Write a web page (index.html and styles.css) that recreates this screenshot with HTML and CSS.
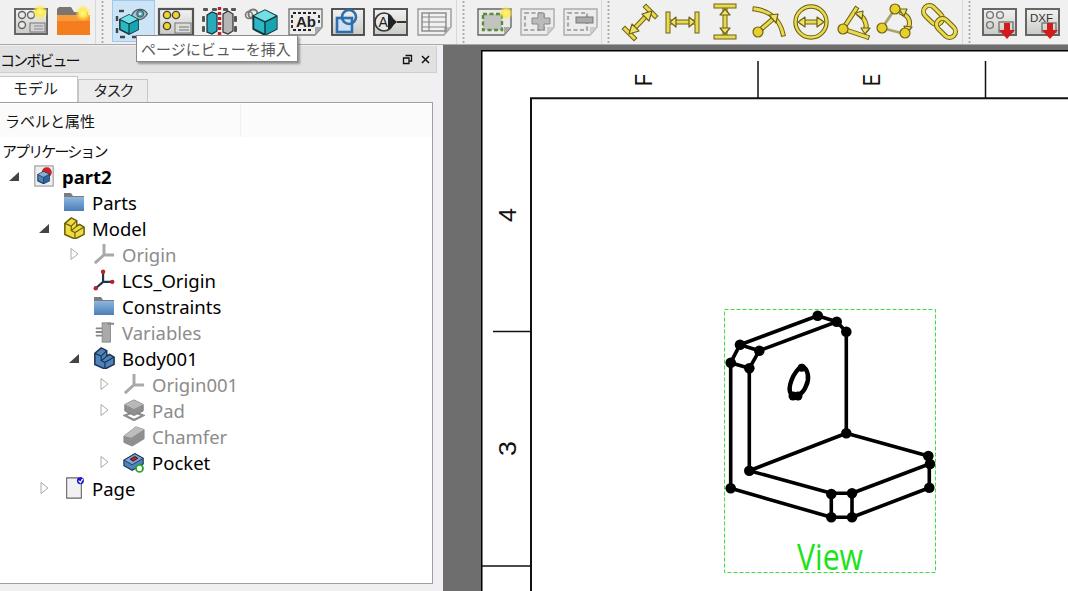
FILE: index.html
```html
<!DOCTYPE html>
<html lang="ja">
<head>
<meta charset="utf-8">
<title>FreeCAD TechDraw</title>
<link rel="stylesheet" href="styles.css">
</head>
<body>
<svg class="defs" aria-hidden="true">
  <defs>
    <radialGradient id="glow"><stop offset="0" stop-color="#fff8a0"/><stop offset=".45" stop-color="#ffe94a"/><stop offset="1" stop-color="#ffe94a" stop-opacity="0"/></radialGradient>
    <linearGradient id="frameFill" x1="0" y1="0" x2="0" y2="1"><stop offset="0" stop-color="#f2f2f0"/><stop offset="1" stop-color="#c9cbc6"/></linearGradient>
    <linearGradient id="folderBlue" x1="0" y1="0" x2="0" y2="1"><stop offset="0" stop-color="#8db6df"/><stop offset="1" stop-color="#4a7fb8"/></linearGradient>
    <symbol id="cube" viewBox="0 0 24 24"><path d="M12 2 22 7V18L12 23 2 18V7Z" fill="#2bb8c4" stroke="#12333a" stroke-width="1.600"/><path d="M2 7 12 2 22 7 12 12Z" fill="#6fe0e4"/><path d="M12 12 22 7V18L12 23Z" fill="#16a3b2"/><path d="M2 7 12 12 22 7M12 12V23" fill="none" stroke="#12333a" stroke-width="1.200"/></symbol>
    <symbol id="bluecube" viewBox="0 0 24 24"><path d="M12 2 22 7V18L12 23 2 18V7Z" fill="#4f83bd" stroke="#1f3553" stroke-width="1.800"/><path d="M2 7 12 2 22 7 12 12Z" fill="#86aed8"/><path d="M12 12 22 7V18L12 23Z" fill="#2f639e"/><path d="M2 7 12 12 22 7M12 12V23" fill="none" stroke="#1f3553" stroke-width="1.300"/></symbol>
    <symbol id="eye" viewBox="0 0 24 24"><path d="M1 13C6 3 18 2 23 11 18 21 6 22 1 13Z" fill="#a9c4c8" stroke="#4a5a60" stroke-width="1.800"/><circle cx="13" cy="11" r="5" fill="#4a9fab" stroke="#334" stroke-width="1"/><circle cx="13" cy="11" r="2" fill="#dfe8ea"/></symbol>
    <symbol id="stair" viewBox="0 0 24 24"><path d="M2 7 9 1 15 4V10L18 8 23 11V19L13 24 2 19Z" stroke-linejoin="round" stroke-width="1.700"/><path d="M2 7 9 10 15 4M9 10V15L13 17 23 11M15 10 9 15M13 17V24" fill="none" stroke-width="1.300"/></symbol>
    <symbol id="axes" viewBox="0 0 24 24"><path d="M12 1V13M12 13H23M12 13 2 22" fill="none" stroke="#a9a9a9" stroke-width="3.200"/></symbol>
    <symbol id="folder" viewBox="0 0 22 20"><path d="M1 1H8L10 4H21V19H1Z" fill="#7c7c7c"/><rect x="1" y="5" width="20" height="14" fill="url(#folderBlue)"/></symbol>
  </defs>
</svg>

<header class="toolbar">
  <div class="group">
    <span class="tb"><svg class="ti" viewBox="0 0 40 40"><rect x="4" y="7" width="32" height="25" fill="url(#frameFill)" stroke="#666" stroke-width="2"/><g fill="#e9e9e9" stroke="#666" stroke-width="1.400"><circle cx="11" cy="13" r="3.500"/><circle cx="20" cy="13" r="3.500"/><circle cx="11" cy="23" r="3.500"/></g><rect x="19" y="21" width="15" height="9" fill="#d4d4d4" stroke="#777"/><path d="M23 24H32M23 27H32" stroke="#888"/><circle cx="29" cy="10" r="8" fill="url(#glow)"/></svg></span>
    <span class="tb"><svg class="ti" viewBox="0 0 40 40"><path d="M3 7 5 5H17L20 10H34V30H3Z" fill="#7b7470"/><path d="M3 13H36V33H3Z" fill="#f47e1e"/><path d="M3 13H36V19H3Z" fill="#f89a3b"/><circle cx="29" cy="11" r="8" fill="url(#glow)"/></svg></span>
  </div>
  <i class="sep"></i>
  <div class="group">
    <span class="tb active"><svg class="ti" viewBox="0 0 40 40"><g fill="none" stroke="#444" stroke-width="2.400" stroke-dasharray="5 7"><path d="M4 15V36H30"/><path d="M6 10H14"/></g><use href="#eye" x="17" y="5" width="19" height="17"/><use href="#cube" x="5" y="12" width="22" height="22"/></svg></span>
    <span class="tb"><svg class="ti" viewBox="0 0 40 40"><rect x="3" y="7" width="34" height="26" fill="url(#frameFill)" stroke="#555" stroke-width="2.200"/><g fill="#f0d62a" stroke="#444" stroke-width="1.400"><circle cx="11" cy="13" r="3.600"/><circle cx="20" cy="13" r="3.600"/><circle cx="11" cy="24" r="3.600"/></g><rect x="19" y="21" width="16" height="10" fill="#dcdcdc" stroke="#777"/><path d="M23 25H33M23 28H33" stroke="#777"/></svg></span>
    <span class="tb"><svg class="ti" viewBox="0 0 40 40"><g fill="#555"><rect x="4" y="6" width="5" height="3" rx="1"/><rect x="13" y="6" width="5" height="3" rx="1"/><rect x="24" y="6" width="5" height="3" rx="1"/><rect x="32" y="6" width="5" height="3" rx="1"/><rect x="3" y="14" width="3" height="6" rx="1"/><rect x="3" y="24" width="3" height="6" rx="1"/><rect x="35" y="14" width="3" height="6" rx="1"/><rect x="35" y="24" width="3" height="6" rx="1"/><rect x="7" y="33" width="6" height="3" rx="1"/><rect x="27" y="33" width="6" height="3" rx="1"/></g><path d="M8 13 13 10 18 12V29L13 32 8 30Z" fill="#29aab8" stroke="#12333a" stroke-width="1.200"/><path d="M24 12 29 9 34 12V29L29 32 24 30Z" fill="#b6b6b6" stroke="#333" stroke-width="1.200"/><path d="M20.500 5V35" stroke="#c41e2a" stroke-width="3.400" stroke-dasharray="3 2"/></svg></span>
    <span class="tb"><svg class="ti" viewBox="0 0 40 40"><circle cx="11" cy="12" r="4.500" fill="none" stroke="#777" stroke-width="2"/><circle cx="7" cy="13" r="3.500" fill="none" stroke="#777" stroke-width="1.600"/><use href="#cube" x="9" y="6" width="28" height="28"/></svg></span>
    <span class="tb"><svg class="ti" viewBox="0 0 40 40"><path d="M4 7H37V25L30 33H4Z" fill="#ededed" stroke="#777" stroke-width="1.400"/><path d="M30 33V25H37Z" fill="#aaa"/><path d="M8 11H33M8 28H28" stroke="#222" stroke-width="1.800" stroke-dasharray="3 2"/><text class="tbtext" x="11" y="25">Ab</text><path d="M7 13V26M34 13V22" stroke="#222" stroke-width="1.800" stroke-dasharray="3 2"/></svg></span>
    <span class="tb"><svg class="ti" viewBox="0 0 40 40"><rect x="4" y="7" width="32" height="26" fill="url(#frameFill)" stroke="#444" stroke-width="1.800"/><rect x="9" y="16" width="15" height="14" fill="#cfe0f2" stroke="#2d6fae" stroke-width="2.600"/><circle cx="21" cy="15" r="7" fill="none" stroke="#2d6fae" stroke-width="2.600"/></svg></span>
    <span class="tb"><svg class="ti" viewBox="0 0 40 40"><rect x="3" y="7" width="33" height="26" fill="url(#frameFill)" stroke="#555" stroke-width="2"/><circle cx="13" cy="20" r="9" fill="#e8e8e8" stroke="#333" stroke-width="1.600"/><path d="M17 12 26 20 17 28Z" fill="#222"/><path d="M26 20H35" stroke="#222" stroke-width="1.800"/><text class="tbtext small" x="7.500" y="25">A</text></svg></span>
    <span class="tb"><svg class="ti" viewBox="0 0 40 40"><path d="M4 7H37V25L30 33H4Z" fill="#f0f0f0" stroke="#999" stroke-width="1.400"/><path d="M30 33V25H37Z" fill="#bbb"/><rect x="8" y="11" width="24" height="18" fill="none" stroke="#888" stroke-width="1.400"/><path d="M8 15H32M8 20H32M8 25H32M15 11V29" stroke="#888" stroke-width="1.200"/></svg></span>
  </div>
  <i class="sep"></i>
  <div class="group">
    <span class="tb"><svg class="ti" viewBox="0 0 40 40"><path d="M4 7H37V25L30 33H4Z" fill="#e9e9e6" stroke="#666" stroke-width="1.400"/><path d="M30 33V25H37Z" fill="#aaa"/><rect x="9" y="12" width="19" height="16" fill="#c2c4c0"/><rect x="9" y="12" width="19" height="16" fill="none" stroke="#5f8a3c" stroke-width="2.400" stroke-dasharray="4 2.500"/><circle cx="32" cy="11" r="7" fill="url(#glow)"/></svg></span>
    <span class="tb"><svg class="ti" viewBox="0 0 40 40"><path d="M4 7H37V25L30 33H4Z" fill="#ececec" stroke="#aaa" stroke-width="1.400"/><path d="M30 33V25H37Z" fill="#ccc"/><rect x="8" y="11" width="19" height="17" fill="none" stroke="#aaa" stroke-width="2.200" stroke-dasharray="4 2.500"/><path d="M21 11H27V16H33V22H27V28H21V22H15V16H21Z" fill="#bbb" stroke="#888"/></svg></span>
    <span class="tb"><svg class="ti" viewBox="0 0 40 40"><path d="M4 7H37V25L30 33H4Z" fill="#ececec" stroke="#aaa" stroke-width="1.400"/><path d="M30 33V25H37Z" fill="#ccc"/><rect x="8" y="11" width="19" height="17" fill="none" stroke="#aaa" stroke-width="2.200" stroke-dasharray="4 2.500"/><rect x="16" y="15" width="17" height="6" fill="#aaa" stroke="#777"/></svg></span>
  </div>
  <i class="sep"></i>
  <div class="group">
    <span class="tb"><svg class="ti" viewBox="0 0 40 40"><g class="yo"><path d="M6 27 15 36M27 5 36 14M13 29 29 12"/></g><g class="yi"><path d="M6 27 15 36M27 5 36 14M13 29 29 12"/></g><path class="yh" d="M33 9 23 12 30 19ZM10 32 13 22 20 29Z"/></svg></span>
    <span class="tb"><svg class="ti" viewBox="0 0 40 40"><g class="yo"><path d="M6 12V29M35 12V29M9 20H32"/></g><g class="yi"><path d="M6 12V29M35 12V29M9 20H32"/></g><path class="yh" d="M14 15 8 20 14 25ZM27 15 33 20 27 25Z"/></svg></span>
    <span class="tb"><svg class="ti" viewBox="0 0 40 40"><g class="yo"><path d="M11 4H29M11 35H29M20 8V31"/></g><g class="yi"><path d="M11 4H29M11 35H29M20 8V31"/></g><path class="yh" d="M15 13 20 7 25 13ZM15 26 20 32 25 26Z"/></svg></span>
    <span class="tb"><svg class="ti" viewBox="0 0 40 40"><g class="yo"><path d="M7 7C22 9 32 18 35 32M11 29 26 16"/></g><g class="yi"><path d="M7 7C22 9 32 18 35 32M11 29 26 16"/></g><path class="yh" d="M21 13 30 12 28 21Z"/><circle class="yd" cx="10" cy="30" r="5"/></svg></span>
    <span class="tb"><svg class="ti" viewBox="0 0 40 40"><circle cx="20" cy="20" r="15.500" fill="none" stroke="#6b5f10" stroke-width="4.400"/><circle cx="20" cy="20" r="15.500" fill="none" stroke="#e9da50" stroke-width="2.400"/><g class="yo"><path d="M12 20H28"/></g><g class="yi"><path d="M12 20H28"/></g><path class="yh" d="M14 15 7 20 14 25ZM26 15 33 20 26 25Z"/></svg></span>
    <span class="tb"><svg class="ti" viewBox="0 0 40 40"><g class="yo"><path d="M33 35 9 27 22 7"/></g><g class="yi"><path d="M33 35 9 27 22 7"/></g><g class="yo"><path d="M26 13C31 17 33 21 32 27"/></g><g class="yi"><path d="M26 13C31 17 33 21 32 27"/></g><path class="yh" d="M21 11 29 9 28 17ZM27 26 36 26 31 32Z"/><circle class="yd" cx="9" cy="27" r="5"/></svg></span>
    <span class="tb"><svg class="ti" viewBox="0 0 40 40"><path d="M18 7 5 26 28 32" fill="none" stroke="#aaa468" stroke-width="2.800"/><g class="yo"><path d="M25 11C33 15 34 21 31 26"/></g><g class="yi"><path d="M25 11C33 15 34 21 31 26"/></g><path class="yh" d="M22 7 30 7 27 14ZM27 24 35 25 30 31Z"/><circle class="yd" cx="18" cy="7" r="5"/><circle class="yd" cx="5" cy="26" r="5"/><circle class="yd" cx="28" cy="31" r="5"/></svg></span>
    <span class="tb"><svg class="ti" viewBox="0 0 40 40"><g class="yo"><rect x="-11" y="-6" width="22" height="12" rx="6" transform="translate(13 13) rotate(45)"/></g><g class="yi"><rect x="-11" y="-6" width="22" height="12" rx="6" transform="translate(13 13) rotate(45)"/></g><g class="yo"><rect x="-11" y="-6" width="22" height="12" rx="6" transform="translate(26 26) rotate(45)"/></g><g class="yi"><rect x="-11" y="-6" width="22" height="12" rx="6" transform="translate(26 26) rotate(45)"/></g></svg></span>
  </div>
  <i class="sep"></i>
  <div class="group">
    <span class="tb"><svg class="ti" viewBox="0 0 40 40"><rect x="3" y="7" width="33" height="26" fill="url(#frameFill)" stroke="#666" stroke-width="2"/><g fill="none" stroke="#777" stroke-width="1.400"><circle cx="10" cy="13" r="3.400"/><circle cx="20" cy="13" r="3.400"/><circle cx="10" cy="23" r="3.400"/><rect x="19" y="20" width="14" height="10"/></g><path d="M24 21H30V28H35L27 37 19 28H24Z" fill="#d01c1c"/></svg></span>
    <span class="tb"><svg class="ti" viewBox="0 0 40 40"><rect x="3" y="7" width="33" height="26" fill="url(#frameFill)" stroke="#666" stroke-width="2"/><text class="dxf" x="7" y="19.500">DXF</text><rect x="19" y="21" width="14" height="9" fill="none" stroke="#777" stroke-width="1.400"/><path d="M24 21H30V28H35L27 37 19 28H24Z" fill="#d01c1c"/></svg></span>
  </div>
</header>

<main class="main">
  <aside class="side">
    <div class="dock-title">
      <span class="jp-tight">コンボビュー</span>
      <span class="dock-btns">
        <svg class="dbtn" viewBox="0 0 11 11"><path d="M3.500 1.500H9.500V7H7M1.500 4H7V9.500H1.500Z" fill="none" stroke="#111" stroke-width="1.300"/></svg>
        <svg class="dbtn" viewBox="0 0 11 11"><path d="M2 2 9 9M9 2 2 9" stroke="#111" stroke-width="1.500"/></svg>
      </span>
    </div>
    <div class="tabs">
      <span class="tab on">モデル</span>
      <span class="tab"><span class="jp-tight">タスク</span></span>
    </div>
    <section class="panel">
      <div class="head"><span class="h1">ラベルと属性</span><span class="h2"></span></div>
      <ul class="tree">
        <li class="row root"><span class="jp-tight">アプリケーション</span></li>
        <li class="row d1"><svg class="arr" viewBox="0 0 12 12"><path d="M1 11H11V2Z" fill="#444"/></svg><svg class="ic" viewBox="0 0 24 24"><rect x="2" y="1" width="20" height="22" fill="#eee" stroke="#888"/><circle cx="15" cy="8" r="5.500" fill="#c9242a"/><use href="#bluecube" x="4" y="6" width="15" height="15"/></svg><b class="lb">part2</b></li>
        <li class="row d2"><span class="arr"></span><svg class="ic" viewBox="0 0 22 20"><use href="#folder" width="22" height="20"/></svg><span class="lb">Parts</span></li>
        <li class="row d2"><svg class="arr" viewBox="0 0 12 12"><path d="M1 11H11V2Z" fill="#444"/></svg><svg class="ic yel" viewBox="0 0 24 24"><use href="#stair" width="24" height="24"/></svg><span class="lb">Model</span></li>
        <li class="row d3 off"><svg class="arr" viewBox="0 0 12 12"><path d="M3 .5 10 6 3 11.500Z" fill="none" stroke="#aaa"/></svg><svg class="ic" viewBox="0 0 24 24"><use href="#axes" width="24" height="24"/></svg><span class="lb">Origin</span></li>
        <li class="row d3"><span class="arr"></span><svg class="ic" viewBox="0 0 24 24"><path d="M11 3V14M11 14H21M11 14 3 21" fill="none" stroke="#24344d" stroke-width="2.400"/><g fill="#b3242a"><circle cx="11" cy="3" r="2.400"/><circle cx="21" cy="14" r="2.400"/><circle cx="3" cy="21" r="2.400"/></g></svg><span class="lb">LCS_Origin</span></li>
        <li class="row d3"><span class="arr"></span><svg class="ic" viewBox="0 0 22 20"><use href="#folder" width="22" height="20"/></svg><span class="lb">Constraints</span></li>
        <li class="row d3 off"><span class="arr"></span><svg class="ic" viewBox="0 0 24 24"><rect x="10" y="2" width="9" height="21" fill="#aaa" stroke="#888"/><path d="M16 3H23M3 8H10M3 12H10M3 16H10" stroke="#888" stroke-width="2"/></svg><span class="lb">Variables</span></li>
        <li class="row d3"><svg class="arr" viewBox="0 0 12 12"><path d="M1 11H11V2Z" fill="#444"/></svg><svg class="ic blu" viewBox="0 0 24 24"><use href="#stair" width="24" height="24"/></svg><span class="lb">Body001</span></li>
        <li class="row d4 off"><svg class="arr" viewBox="0 0 12 12"><path d="M3 .5 10 6 3 11.500Z" fill="none" stroke="#aaa"/></svg><svg class="ic" viewBox="0 0 24 24"><use href="#axes" width="24" height="24"/></svg><span class="lb">Origin001</span></li>
        <li class="row d4 off"><svg class="arr" viewBox="0 0 12 12"><path d="M3 .5 10 6 3 11.500Z" fill="none" stroke="#aaa"/></svg><svg class="ic" viewBox="0 0 24 24"><path d="M2 18 12 14 22 18 12 23Z" fill="#fff" stroke="#8c8c8c" stroke-width="2.400"/><path d="M2 6 12 1 22 6V13L12 18 2 13Z" fill="#8f8f8f" stroke="#777"/><path d="M2 6 12 11 22 6 12 1Z" fill="#b8b8b8"/></svg><span class="lb">Pad</span></li>
        <li class="row d4 off"><span class="arr"></span><svg class="ic" viewBox="0 0 24 24"><path d="M1 12 14 2 23 5V15L10 23 1 19Z" fill="#8f8f8f" stroke="#888"/><path d="M14 2 23 5 9 14 1 12Z" fill="#bdbdbd"/></svg><span class="lb">Chamfer</span></li>
        <li class="row d4"><svg class="arr" viewBox="0 0 12 12"><path d="M3 .5 10 6 3 11.500Z" fill="none" stroke="#aaa"/></svg><svg class="ic" viewBox="0 0 24 24"><path d="M1 10 13 3 22 8V14L10 21 1 16Z" fill="#4f83bd" stroke="#1f3553" stroke-width="1.300"/><path d="M1 10 13 3 22 8 10 15Z" fill="#7aa5d3" stroke="#1f3553"/><path d="M8 9 13 6 16 8 11 11Z" fill="#c8242a" stroke="#400"/><circle cx="18" cy="19" r="3.800" fill="#fff" stroke="#2aa52a" stroke-width="2"/></svg><span class="lb">Pocket</span></li>
        <li class="row d2"><svg class="arr" viewBox="0 0 12 12"><path d="M3 .5 10 6 3 11.500Z" fill="none" stroke="#aaa"/></svg><svg class="ic" viewBox="0 0 24 24"><path d="M4 1H20V23H4Z" fill="#f1f1f1" stroke="#666" stroke-width="1.200"/><circle cx="19" cy="4" r="3.800" fill="#1616c8"/><path d="M17 4 19 6 21.500 2" fill="none" stroke="#fff" stroke-width="1.300"/></svg><span class="lb">Page</span></li>
      </ul>
    </section>
  </aside>
  <div class="gutter"></div>
  <svg class="sheet" viewBox="443 45 625 546">
    <rect x="443" y="45" width="625" height="546" fill="#6e6e6e"/>
    <rect class="page" x="481.750" y="50.750" width="590" height="545"/>
    <path class="frame" d="M1070 98.300H531V593"/>
    <path class="tick" d="M758 61V98M985.500 61V98M493 331.500H531M482 566H531"/>
    <text class="zone" transform="translate(652 86) rotate(-90)" textLength="12" lengthAdjust="spacingAndGlyphs">F</text>
    <text class="zone" transform="translate(880 86) rotate(-90)" textLength="12" lengthAdjust="spacingAndGlyphs">E</text>
    <text class="zone" transform="translate(516 222) rotate(-90)" textLength="14" lengthAdjust="spacingAndGlyphs">4</text>
    <text class="zone" transform="translate(516 456) rotate(-90)" textLength="15" lengthAdjust="spacingAndGlyphs">3</text>
    <rect class="vbox" x="724.500" y="309.500" width="211" height="263"/>
    <path class="edge" d="M817.700 315.700 740 344.700M836.700 321.700 759.300 350.700M817.700 315.700 836.700 321.700 846.300 331.700V433.300L749.300 470.700M740 344.700 759.300 350.700 749.300 368.300 730.700 362.700 740 344.700M730.700 362.700V488.300L831.300 517.300H852L929.300 487.700V464L852 493.300H831.300L749.300 470.700V368.300M831.300 494V517.300M852 493.300V517.300M846.300 433.300 928.300 456 930 464"/>
    <path class="edge hole" d="M802 366C808 369 810 378 806 386 803 394 795 399 791 394 787 388 793 372 802 366Z"/>
    <g class="dots">
      <circle cx="817.700" cy="315.700" r="5.300"/><circle cx="836.700" cy="321.700" r="5.300"/><circle cx="846.300" cy="331.700" r="5.300"/><circle cx="740" cy="344.700" r="5.300"/><circle cx="759.300" cy="350.700" r="5.300"/><circle cx="730.700" cy="362.700" r="5.300"/><circle cx="749.300" cy="368.300" r="5.300"/><circle cx="846.300" cy="433.300" r="5.300"/><circle cx="749.300" cy="470.700" r="5.300"/><circle cx="730.700" cy="488.300" r="5.300"/><circle cx="928.300" cy="456" r="5.300"/><circle cx="930" cy="464" r="5.300"/><circle cx="929.300" cy="487.700" r="5.300"/><circle cx="831.300" cy="494" r="5.300"/><circle cx="852" cy="493.300" r="5.300"/><circle cx="831.300" cy="517.300" r="5.300"/><circle cx="852" cy="517.300" r="5.300"/><circle cx="801.700" cy="367.700" r="4"/><circle cx="793" cy="396" r="4.500"/><circle cx="798" cy="396" r="4.500"/>
    </g>
    <text class="vlabel" x="797" y="570" textLength="66" lengthAdjust="spacingAndGlyphs">View</text>
  </svg>
</main>

<div class="tip">ページにビューを挿入</div>
</body>
</html>
```

FILE: styles.css
```css
* { box-sizing: border-box; }
html, body { margin: 0; height: 100%; }
body {
  width: 1068px;
  height: 591px;
  overflow: hidden;
  position: relative;
  display: flex;
  flex-direction: column;
  background: #f0f0f0;
  font-family: "Noto Sans", "Noto Sans CJK JP", sans-serif;
  color: #000;
}
.defs { position: absolute; width: 0; height: 0; }

.toolbar {
  height: 45px;
  flex: none;
  display: flex;
  align-items: center;
  padding-left: 9px;
  background: #f0f0f0;
  border-bottom: 1px solid #a8a8a8;
}
.group { display: flex; }
.tb {
  width: 43px;
  height: 44px;
  display: flex;
  align-items: center;
  justify-content: center;
}
.tb.active {
  background: #cde4f7;
  box-shadow: inset 0 0 0 1px #9cc9ee;
  height: 42px;
}
.ti { width: 40px; height: 40px; overflow: visible; }
.sep {
  width: 16.5px;
  height: 44px;
  border-left: 1px solid #d8d8d8;
  background: radial-gradient(circle, #aaa 1px, transparent 1.2px) 5px 0 / 3px 4px repeat-y;
}
.yo path, .yo rect { fill: none; stroke: #6f6214; stroke-width: 5; stroke-linecap: square; }
.yi path, .yi rect { fill: none; stroke: #e9da50; stroke-width: 3; stroke-linecap: square; }
.yh { fill: #efe269; stroke: #6f6214; stroke-width: 1.2; stroke-linejoin: round; }
.yd { fill: #e8cf2c; stroke: #6f6214; stroke-width: 1.200; }
.tbtext { font: 700 15px "Liberation Sans", sans-serif; fill: #222; }
.tbtext.small { font-size: 14px; font-weight: 400; }
.dxf { font: 400 11.5px "Liberation Sans", sans-serif; fill: #333; }

.main { flex: 1; min-height: 0; display: flex; }
.side { width: 433px; flex: none; display: flex; flex-direction: column; position: relative; }
.gutter { width: 10px; flex: none; background: #f1eff3; }
.sheet { width: 625px; height: 546px; flex: none; display: block; }

.jp-tight { letter-spacing: -1.9px; }

.dock-title {
  margin-top: 1px;
  width: 437px;
  height: 27px;
  flex: none;
  display: flex;
  align-items: center;
  justify-content: space-between;
  padding-right: 5px;
  background: #e1e1e1;
  border: solid #cfcfcf;
  border-width: 0 1px 1px 0;
  font-size: 15px;
  color: #111;
  position: relative;
  z-index: 1;
}
.dock-btns { display: flex; gap: 7px; }
.dbtn { width: 11px; height: 11px; }

.tabs { display: flex; align-items: flex-end; height: 29px; flex: none; }
.tab {
  width: 70px;
  height: 23px;
  padding-bottom: 3px;
  display: flex;
  align-items: center;
  justify-content: center;
  background: #ececec;
  border: 1px solid #c6c6c6;
  border-bottom: 0;
  font-size: 15px;
  color: #222;
}
.tab.on {
  width: 78px;
  height: 26px;
  padding: 0 6px 4px 0;
  background: #fff;
  border-left: 0;
}
.panel {
  flex: none;
  height: 482px;
  background: #fff;
  border: 1px solid #a0a0a0;
  border-left: 0;
  padding-top: 1px;
}
.head { display: flex; height: 33px; background: #fbfbfb; font-size: 15px; }
.h1 { width: 241px; padding: 6px 0 0 5px; border-right: 1px solid #efefef; color: #111; }
.h2 { flex: 1; }

.tree { list-style: none; margin: 0; padding: 0; font-size: 18.5px; }
.row { height: 26px; display: flex; align-items: center; white-space: nowrap; }
.root { padding-left: 2px; font-size: 15px; color: #111; }
.d1 { padding-left: 8px; }
.d2 { padding-left: 38px; }
.d3 { padding-left: 68px; }
.d4 { padding-left: 98px; }
.arr { width: 12px; height: 12px; flex: none; margin-right: 13px; }
.ic { width: 22px; height: 22px; flex: none; margin-right: 7px; }
.yel { fill: #f0dc3c; stroke: #6b5f10; }
.blu { fill: #4f83bd; stroke: #1f3553; }
b.lb { font-weight: 700; }
.off .lb { color: #8c8c8c; }

.page { fill: #fff; stroke: #000; stroke-width: 1.5; }
.frame { fill: none; stroke: #111; stroke-width: 2; }
.tick { fill: none; stroke: #111; stroke-width: 1.5; }
.zone { font: 400 23px "Liberation Sans", sans-serif; fill: #111; }
.vbox { fill: none; stroke: #3fdc3f; stroke-width: 1; stroke-dasharray: 4 2; }
.edge { fill: none; stroke: #000; stroke-width: 3.6; stroke-linejoin: round; }
.hole { stroke-width: 4.5; }
.dots circle { fill: #000; }
.vlabel { font: 400 36px "Open Sans", sans-serif; fill: #18e418; }

.tip {
  position: absolute;
  z-index: 5;
  left: 136px;
  top: 35px;
  width: 162px;
  height: 27px;
  display: flex;
  align-items: center;
  padding-left: 4px;
  background: #fff;
  border: 1px solid #8a8a8a;
  box-shadow: 2px 2px 2px rgba(0, 0, 0, .35);
  font-size: 15px;
  color: #5a5a5a;
  white-space: nowrap;
}
```
